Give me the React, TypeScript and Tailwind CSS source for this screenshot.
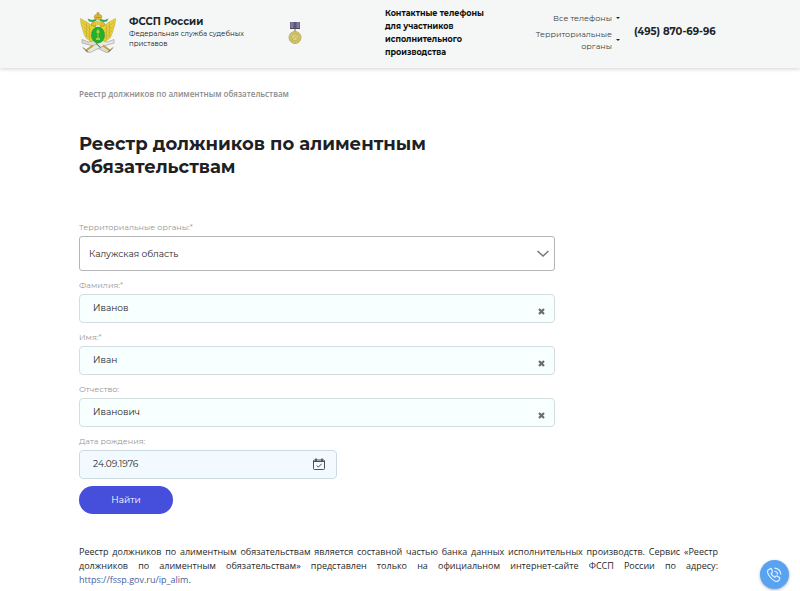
import React, { useState } from "react";

const Emblem = () => (
    <svg viewBox="0 0 76 82" className="w-[38px] h-[41px] shrink-0" aria-hidden="true">
        {/* wings */}
        <g fill="#e8d03a" stroke="#b8a232" strokeWidth="1">
            <path d="M34 26 L26 27 L14 19 L3 13 L4 24 L7 34 L10 44 L14 52 L22 58 L32 60 Z" />
            <path d="M42 26 L50 27 L62 19 L73 13 L72 24 L69 34 L66 44 L62 52 L54 58 L44 60 Z" />
        </g>
        <g fill="none" stroke="#c0a832" strokeWidth="1.2">
            <path d="M6 20 L25 36 M7 28 L24 42 M10 37 L24 48 M13 46 L26 53 M15 21 L15 50 M21 25 L21 56" />
            <path d="M70 20 L51 36 M69 28 L52 42 M66 37 L52 48 M63 46 L50 53 M61 21 L61 50 M55 25 L55 56" />
        </g>
        {/* ribbons */}
        <path d="M34 14 L25 16 L17 13 L20 19 L27 20 L35 18 Z M42 14 L51 16 L59 13 L56 19 L49 20 L41 18 Z" fill="#35a35a" />
        {/* heads and crown */}
        <path d="M32 29 L25 27 L25 22 L31 19 L36 24 Z M44 29 L51 27 L51 22 L45 19 L40 24 Z" fill="#ddc02c" stroke="#9a8420" />
        <path d="M32 15 L30 8 L34 5 L38 3 L42 5 L46 8 L44 15 Z" fill="#d9b53a" stroke="#a58c34" />
        <path d="M38 0 V7 M35 2 H41 M33 11 H43" stroke="#a98b2c" strokeWidth="1.5" />
        <circle cx="38" cy="22" r="5" fill="#e2c94b" />
        {/* scroll and crossed axes */}
        <path d="M6 55 L19 60 L31 57 L63 77 L54 81 L31 69 L17 65 L6 62 Z" fill="#dcdcd3" stroke="#85857b" />
        <path d="M70 55 L57 60 L46 57 L13 77 L22 81 L47 69 L60 65 L70 62 Z" fill="#e8e8e0" stroke="#85857b" />
        <path d="M14 77 L28 67 M62 77 L48 67" stroke="#c3a537" strokeWidth="4" />
        <path d="M8 71 L18 81 M68 71 L58 81 M34 63 L43 71" stroke="#555c57" strokeWidth="2" />
        {/* shield */}
        <ellipse cx="38" cy="46" rx="13" ry="16" fill="#20b12e" stroke="#158522" />
        <path d="M35 38 L38 34 L41 38 V42 H39 V52 H42 V56 H34 V52 H37 V42 H35 Z" fill="#b5c938" />
    </svg>
);

const Medal = () => (
    <svg viewBox="0 0 28 44" className="w-[14px] h-[22px]" aria-hidden="true">
        <path d="M4 0 H24 V14 H4 Z" fill="#6a6488" />
        <path d="M8 0 V14 M20 0 V14" stroke="#8983a3" strokeWidth="3" />
        <path d="M4 13 H24 M14 0 V14" stroke="#4e475f" strokeWidth="2" />
        <path d="M14 14 V20" stroke="#b19d50" strokeWidth="3" />
        <circle cx="14" cy="31" r="12" fill="#cfc16a" stroke="#c0b060" strokeWidth="2" />
        <path d="M7 29 L11 25 L16 24 L21 29 L18 36 L10 37 Z" fill="#e1d686" stroke="#b3a24f" />
        <path d="M10 33 L14 27 L18 34 M7 37 L20 25" fill="none" stroke="#b5a552" />
    </svg>
);

const Caret = () => (
    <svg viewBox="0 0 4 2" className="w-1 h-[2px] shrink-0" aria-hidden="true">
        <path d="M0 0 H4 L2 2 Z" fill="#222" />
    </svg>
);

const TextField = ({ id, label, initial }: { id: string; label: string; initial: string }) => {
    const [value, setValue] = useState(initial);
    return (
        <div className="mt-2">
            <label htmlFor={id} className="block text-[8px] leading-3 text-[#979797]">{label}</label>
            <div className="mt-[3px] flex h-[29px] items-center rounded-[4px] border border-[#d3dddf] bg-[#f8ffff] pr-2">
                <input
                    id={id}
                    type="text"
                    value={value}
                    onChange={(e) => setValue(e.target.value)}
                    className="min-w-0 flex-1 bg-transparent pl-[13px] pb-[2px] text-[9px] leading-4 text-[#1f2322] outline-none"
                />
                <button type="button" aria-label="Очистить" onClick={() => setValue("")} className="mt-[6px] p-[1px]">
                    <svg viewBox="0 0 7 7" className="size-[7px]" aria-hidden="true">
                        <path d="M1 1 L6 6 M6 1 L1 6" stroke="#6b6b6b" strokeWidth="2.2" />
                    </svg>
                </button>
            </div>
        </div>
    );
};

const Header = () => (
    <header className="flex h-[68px] items-start bg-[#f5f7f7] pl-[79px] pr-[82px] shadow-[0_1px_4px_rgba(0,0,0,0.18)]">
        <a href="#" className="flex flex-1 items-start pt-3">
            <Emblem />
            <div className="ml-3 w-[124px] pt-[3px]">
                <p className="text-[10px] leading-[14px] font-bold text-[#202427]">ФССП России</p>
                <p className="whitespace-nowrap text-[7px] leading-[10px] text-[#15191b]">
                    Федеральная служба судебных
                    <br />
                    приставов
                </p>
            </div>
            <div className="ml-[35px] mt-[10px]">
                <Medal />
            </div>
        </a>
        <p className="w-[110px] pt-[7px] text-[8px] leading-[13px] font-bold text-[#0c0f10]">
            Контактные телефоны для участников исполнительного производства
        </p>
        <nav className="ml-6 flex w-[101px] flex-col items-end gap-1 pt-3 text-right text-[8px] leading-3 text-[#3f4243]">
            <button type="button" className="flex items-center gap-1 text-right">
                <span>Все телефоны</span>
                <Caret />
            </button>
            <button type="button" className="flex items-center gap-1 text-right">
                <span>
                    Территориальные
                    <br />
                    органы
                </span>
                <Caret />
            </button>
        </nav>
        <a href="tel:+74958706996" className="ml-[14px] w-[84px] whitespace-nowrap pt-[25px] text-[10px] leading-[14px] font-bold text-[#202427]">
            (495) 870-69-96
        </a>
    </header>
);

const App = () => {
    const [region, setRegion] = useState("Калужская область");
    const [date, setDate] = useState("24.09.1976");

    return (
        <div className="min-h-screen bg-white font-['Montserrat',Inter,sans-serif]">
            <Header />
            <main className="pl-[79px] pr-[82px] pb-1">
                <p className="pt-5 font-['Open_Sans',sans-serif] text-[8px] leading-3 font-semibold text-[#8c8c8c]">
                    Реестр должников по алиментным обязательствам
                </p>
                <h1 className="mt-[33px] max-w-[400px] text-[18px] leading-[23px] font-bold text-[#1d2124]">
                    Реестр должников по алиментным обязательствам
                </h1>
                <form className="mt-[42px] max-w-[476px]" onSubmit={(e) => e.preventDefault()}>
                    <label htmlFor="region" className="block text-[8px] leading-3 text-[#979797]">
                        Территориальные органы:*
                    </label>
                    <div className="relative mt-[3px]">
                        <select
                            id="region"
                            value={region}
                            onChange={(e) => setRegion(e.target.value)}
                            className="h-[35px] w-full appearance-none rounded-[3px] border border-[#b5b5b5] bg-white pl-[9px] pr-8 text-[9px] text-[#1f2322] outline-none"
                        >
                            <option>Калужская область</option>
                        </select>
                        <svg viewBox="0 0 12 8" className="pointer-events-none absolute right-[6px] top-[14px] h-2 w-3" fill="none" aria-hidden="true">
                            <path d="M0.5 1 L6 6 L11.5 1" stroke="#777" strokeWidth="1.5" />
                        </svg>
                    </div>
                    <TextField id="surname" label="Фамилия:*" initial="Иванов" />
                    <TextField id="name" label="Имя:*" initial="Иван" />
                    <TextField id="patronymic" label="Отчество:" initial="Иванович" />
                    <div className="mt-2 max-w-[258px]">
                        <label htmlFor="birth" className="block text-[8px] leading-3 text-[#979797]">Дата рождения:</label>
                        <div className="mt-[3px] flex h-[29px] items-center rounded-[4px] border border-[#ccdbe2] bg-[#f2faff] pr-[11px]">
                            <input
                                id="birth"
                                type="text"
                                value={date}
                                onChange={(e) => setDate(e.target.value)}
                                className="min-w-0 flex-1 bg-transparent pl-[13px] pb-[2px] text-[9px] leading-4 text-[#1f2322] outline-none"
                            />
                            <button type="button" aria-label="Выбрать дату" className="pb-[2px]">
                                <svg viewBox="0 0 12 12" className="size-3" fill="none" stroke="#4b5053" aria-hidden="true">
                                    <path d="M1.5 2 H10.5 Q11.5 2 11.5 3 V10.5 Q11.5 11.5 10.5 11.5 H1.5 Q0.5 11.5 0.5 10.5 V3 Q0.5 2 1.5 2 Z" />
                                    <path d="M1 3.5 H11" />
                                    <path d="M3 0.5 V3 M9 0.5 V3" strokeWidth="1.6" />
                                    <path d="M3.8 7.6 L5.4 9.2 L8.6 5.8" />
                                </svg>
                            </button>
                        </div>
                    </div>
                    <button type="submit" className="mt-[7px] block h-7 w-[94px] rounded-full bg-[#464edc] text-[9px] text-white">
                        Найти
                    </button>
                </form>
                <p className="mt-[31px] text-justify font-['Open_Sans',sans-serif] text-[9px] leading-[14px] text-[#26292b]">
                    Реестр должников по алиментным обязательствам является составной частью банка данных исполнительных
                    производств. Сервис «Реестр должников по алиментным обязательствам» представлен только на официальном
                    интернет-сайте ФССП России по адресу:{" "}
                    <a href="https://fssp.gov.ru/ip_alim" className="text-[#4a5c9c]">https://fssp.gov.ru/ip_alim</a>.
                </p>
            </main>
            <button
                type="button"
                aria-label="Позвонить"
                className="fixed bottom-[2px] right-[11px] flex size-[29px] items-center justify-center rounded-full bg-[#58a2f2] shadow-[0_1px_3px_rgba(0,0,0,0.3)]"
            >
                <svg viewBox="0 0 24 24" className="size-[17px]" fill="none" stroke="#e8f4ff" strokeWidth="1.6" strokeLinecap="round" strokeLinejoin="round" aria-hidden="true">
                    <path d="M6.5 3.5 L3 5.5 Q1 8 4 13 Q8 19 13 21.5 Q16 22.5 18 20.5 L19.5 18 Q20 17 19 16.3 L15.5 14.2 Q14.5 13.7 13.8 14.6 L12.5 16 Q9 14.5 7 10.7 L8.6 9.5 Q9.5 8.8 9 7.8 L7.8 4.2 Q7.3 3.2 6.5 3.5 Z" />
                    <path d="M12.5 7.5 Q16 8 16.5 11.5 M12.5 3 Q20 4 21 11.5" />
                </svg>
            </button>
        </div>
    );
};

export default App;
